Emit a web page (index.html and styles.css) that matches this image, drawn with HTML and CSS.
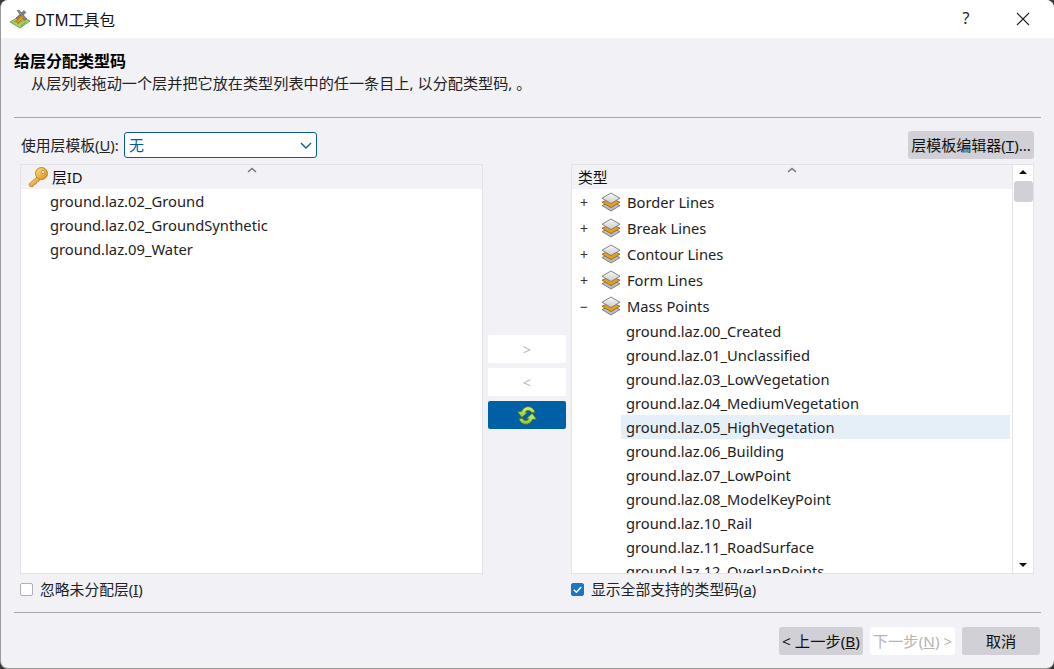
FILE: index.html
```html
<!DOCTYPE html>
<html lang="zh">
<head>
<meta charset="utf-8">
<title>DTM工具包</title>
<link rel="stylesheet" href="styles.css">
</head>
<body>
<svg class="defs" width="0" height="0" aria-hidden="true">
  <defs>
    <linearGradient id="lt" x1="0" y1="0" x2="0" y2="1"><stop offset="0" stop-color="#fafafa"/><stop offset="1" stop-color="#c9c9c9"/></linearGradient>
    <linearGradient id="key" x1="0" y1="0" x2="1" y2="1"><stop offset="0" stop-color="#fbe08a"/><stop offset="1" stop-color="#e08a12"/></linearGradient>
    <linearGradient id="gr" x1="0" y1="0" x2="0" y2="1"><stop offset="0" stop-color="#d2ee8a"/><stop offset="1" stop-color="#8ccb1e"/></linearGradient>
    <symbol id="layers" viewBox="0 0 20 20">
      <path d="M10 9.500 19 13.600 10 19 1 13.600Z" fill="#bcbcbc" stroke="#777" stroke-width=".9"/>
      <path d="M10 6 19 10.200 10 15.600 1 10.200Z" fill="#e59f1c" stroke="#8a6a22" stroke-width=".9"/>
      <path d="M10 1 19 6.200 10 11.600 1 6.200Z" fill="url(#lt)" stroke="#777" stroke-width=".9"/>
    </symbol>
  </defs>
</svg>
<div class="window">
  <header class="titlebar">
    <svg class="app-icon" viewBox="0 0 22 22" aria-hidden="true">
      <path d="M1 14 11 8 21 13 11 20Z" fill="#a5cf62" stroke="#6f8f3a" stroke-width=".8"/>
      <path d="M5 14 11 11M8 16 15 12M12 18 17 14" stroke="#6f9a33" stroke-width=".8" fill="none"/>
      <path d="M15 2.500 17 4.500 9 12 7 10Z" fill="#7d7d7d" stroke="#555" stroke-width=".5"/>
      <path d="M8 2.500 10 2 18 11 15.500 12.500Z" fill="#8a8a8a" stroke="#555" stroke-width=".5"/>
      <path d="M7 13.500 12 7.500 14.500 9.500 9.500 15Z" fill="#ee8f16" stroke="#a8600e" stroke-width=".5"/>
    </svg>
    <span class="title-text">DTM工具包</span>
    <span class="title-help">?</span>
    <svg class="title-close" viewBox="0 0 14 14" aria-hidden="true"><path d="M1 1 13 13M13 1 1 13" stroke="#222" stroke-width="1.100" fill="none"/></svg>
  </header>

  <section class="intro">
    <h1>给层分配类型码</h1>
    <p>从层列表拖动一个层并把它放在类型列表中的任一条目上, 以分配类型码, 。</p>
  </section>
  <hr class="rule rule-top">

  <div class="template-row">
    <label class="template-label">使用层模板(<u>U</u>):</label>
    <div class="combo">
      <span>无</span>
      <svg class="combo-chev" viewBox="0 0 12 7" aria-hidden="true"><path d="M1 1 6 6 11 1" stroke="#0a5a9c" stroke-width="1.400" fill="none"/></svg>
    </div>
    <button class="btn btn-template">层模板编辑器(<u>T</u>)...</button>
  </div>

  <div class="panels">
    <div class="panel">
      <div class="col-head">
        <span class="col-title">
          <svg class="key-icon" viewBox="0 0 22 22" aria-hidden="true">
            <path d="M11 10 2 18 3 20.500 6 20.500 7 18.500 9 18 9.500 16 11.500 15.500 14 12Z" fill="url(#key)" stroke="#b56d0c" stroke-width=".7"/>
            <circle cx="14.500" cy="7.500" r="6" fill="url(#key)" stroke="#b56d0c" stroke-width=".8"/>
            <circle cx="16" cy="6" r="1.700" fill="#fff6d0" stroke="#b56d0c" stroke-width=".6"/>
          </svg>
          层ID
        </span>
        <svg class="sort" viewBox="0 0 10 6" aria-hidden="true"><path d="M1 5 5 1.500 9 5" stroke="#777" stroke-width="1.500" fill="none"/></svg>
      </div>
      <ul class="list">
        <li>ground.laz.02_Ground</li>
        <li>ground.laz.02_GroundSynthetic</li>
        <li>ground.laz.09_Water</li>
      </ul>
    </div>

    <div class="middle">
      <button class="mid-btn">&gt;</button>
      <button class="mid-btn">&lt;</button>
      <button class="mid-btn mid-primary" aria-label="刷新">
        <svg viewBox="0 0 20 21" width="20" height="21" aria-hidden="true">
          <path d="M4.500 6.500C6 3 9.500 1 13 2 15.500 2.800 17.500 4.800 18 7.500L14.500 7.500C13.800 5.800 11.800 5 10 5.700 9.200 6 8.700 6.500 8.300 7.200L10.500 7.500 4.800 12.500 .5 6.700Z" fill="url(#gr)" stroke="#4f6d1c" stroke-width=".7"/>
          <path d="M15.500 14.500C14 18 10.500 20 7 19 4.500 18.200 2.500 16.200 2 13.500L5.500 13.500C6.200 15.200 8.200 16 10 15.300 10.800 15 11.300 14.500 11.700 13.800L9.500 13.500 15.200 8.500 19.500 14.300Z" fill="url(#gr)" stroke="#4f6d1c" stroke-width=".7"/>
        </svg>
      </button>
    </div>

    <div class="panel panel-tree">
      <div class="tree-main">
        <div class="col-head">
          <span class="col-title col-title-type">类型</span>
          <svg class="sort" viewBox="0 0 10 6" aria-hidden="true"><path d="M1 5 5 1.500 9 5" stroke="#777" stroke-width="1.500" fill="none"/></svg>
        </div>
        <div class="tree">
          <div class="group"><span class="exp">+</span><svg class="layer-icon"><use href="#layers"/></svg><span>Border Lines</span></div>
          <div class="group"><span class="exp">+</span><svg class="layer-icon"><use href="#layers"/></svg><span>Break Lines</span></div>
          <div class="group"><span class="exp">+</span><svg class="layer-icon"><use href="#layers"/></svg><span>Contour Lines</span></div>
          <div class="group"><span class="exp">+</span><svg class="layer-icon"><use href="#layers"/></svg><span>Form Lines</span></div>
          <div class="group"><span class="exp">−</span><svg class="layer-icon"><use href="#layers"/></svg><span>Mass Points</span></div>
          <div class="leaf">ground.laz.00_Created</div>
          <div class="leaf">ground.laz.01_Unclassified</div>
          <div class="leaf">ground.laz.03_LowVegetation</div>
          <div class="leaf">ground.laz.04_MediumVegetation</div>
          <div class="leaf selected">ground.laz.05_HighVegetation</div>
          <div class="leaf">ground.laz.06_Building</div>
          <div class="leaf">ground.laz.07_LowPoint</div>
          <div class="leaf">ground.laz.08_ModelKeyPoint</div>
          <div class="leaf">ground.laz.10_Rail</div>
          <div class="leaf">ground.laz.11_RoadSurface</div>
          <div class="leaf">ground.laz.12_OverlapPoints</div>
        </div>
      </div>
      <div class="scrollbar">
        <span class="arrow arrow-up"></span>
        <span class="thumb"></span>
        <span class="arrow arrow-down"></span>
      </div>
    </div>
  </div>

  <div class="checks">
    <label class="check"><span class="box"></span>忽略未分配层(<u>I</u>)</label>
    <label class="check"><span class="box box-on"><svg viewBox="0 0 14 14" aria-hidden="true"><path d="M3 7.200 5.800 10 11 4.200" stroke="#fff" stroke-width="1.600" fill="none"/></svg></span>显示全部支持的类型码(<u>a</u>)</label>
  </div>
  <hr class="rule rule-bottom">

  <footer class="footer">
    <button class="btn btn-back">&lt; 上一步(<u>B</u>)</button>
    <button class="btn btn-next" disabled>下一步(<u>N</u>) &gt;</button>
    <button class="btn btn-cancel">取消</button>
  </footer>
</div>
</body>
</html>
```

FILE: styles.css
```css
* { box-sizing: border-box; }
html, body { margin: 0; height: 100%; }
body {
  background: #3a3a3a;
  font-family: "Noto Sans", "Noto Sans CJK SC", sans-serif;
  font-size: 14px;
  color: #111;
  overflow: hidden;
}
.defs { display: block; height: 0; }
.window {
  width: 1054px;
  height: 669px;
  background: #f1f1f6;
  border-radius: 8px;
  border-left: 1px solid #9a9a9a;
  border-bottom: 1px solid #9a9a9a;
  overflow: hidden;
  display: flex;
  flex-direction: column;
}
.titlebar {
  height: 38px;
  background: #fff;
  display: flex;
  align-items: center;
  padding-left: 8px;
  flex: none;
}
.app-icon { width: 22px; height: 22px; flex: none; }
.title-text { margin-left: 4px; font-size: 15.500px; color: #111; }
.title-help { margin-left: auto; width: 14px; font-size: 16px; color: #222; text-align: center; padding-bottom: 2px; }
.title-close { width: 14px; height: 14px; margin: 0 24px 0 43px; }

.intro { height: 79px; padding: 12px 0 0 13px; flex: none; }
.intro h1 { margin: 0; font-size: 16px; line-height: 22px; font-weight: 700; color: #000; }
.intro p { margin: 0 0 0 17px; font-size: 15.150px; line-height: 22px; color: #222; white-space: nowrap; }

.rule { margin: 0 13px 0 13px; height: 1px; border: 0; background: #a6a6ab; flex: none; }

.template-row {
  display: flex;
  align-items: center;
  height: 28px;
  margin: 13px 20px 5px 20px;
  flex: none;
}
.template-label { font-size: 14.800px; width: 103px; color: #222; white-space: nowrap; padding-bottom: 2px; }
.combo {
  width: 193px;
  height: 26px;
  background: #fff;
  border: 1px solid #0a5a9c;
  border-radius: 3px;
  color: #005a9e;
  font-size: 15px;
  display: flex;
  align-items: center;
  justify-content: space-between;
  padding: 0 3px 2px 4px;
}
.combo-chev { width: 12px; height: 7px; margin: 2px 1px 0 0; }
.btn {
  font-family: inherit;
  border: 0;
  border-radius: 3px;
  background: #d0d0d6;
  color: #111;
  font-size: 15px;
  padding: 0 0 2px;
  white-space: nowrap;
}
.btn-template { margin-left: auto; width: 126px; height: 28px; }

.panels {
  display: grid;
  grid-template-columns: 463px 88px 463px;
  margin-left: 19px;
  height: 410px;
  flex: none;
}
.panel { background: #fff; border: 1px solid #e2e2e8; overflow: hidden; }
.col-head {
  height: 24px;
  background: #f1f1f6;
  display: grid;
  grid-template-columns: 1fr auto 1fr;
  align-items: center;
  font-size: 14.800px;
  padding-bottom: 2px;
}
.col-title { display: flex; align-items: center; gap: 3px; padding-left: 6px; white-space: nowrap; color: #111; }
.key-icon { width: 22px; height: 22px; flex: none; margin-bottom: -1px; }
.sort { width: 10px; height: 6px; align-self: start; margin-top: 2px; }
.list { list-style: none; margin: 0; padding: 0; }
.list li { height: 24px; line-height: 24px; padding-left: 29px; font-size: 14.750px; color: #222; }

.middle {
  display: flex;
  flex-direction: column;
  align-items: center;
  gap: 5px;
  padding-top: 171px;
}
.mid-btn {
  width: 78px;
  height: 28px;
  border: 0;
  border-radius: 2px;
  background: #fff;
  color: #bdbdbd;
  font-family: inherit;
  font-size: 14.500px;
  padding: 0;
  display: flex;
  align-items: center;
  justify-content: center;
}
.mid-primary { background: #0060a6; }

.panel-tree { display: flex; }
.tree-main { flex: 1; min-width: 0; }
.tree { height: 384px; overflow: hidden; }
.group {
  height: 26px;
  display: flex;
  align-items: center;
  font-size: 14.700px;
  color: #222;
}
.exp { width: 29px; padding-left: 8px; font-size: 14px; color: #333; flex: none; }
.layer-icon { width: 20px; height: 20px; flex: none; margin-right: 6px; }
.leaf {
  height: 24px;
  line-height: 24px;
  font-size: 14.700px;
  color: #222;
  margin-left: 49px;
  padding-left: 5px;
  margin-right: 2px;
}
.selected { background: #e5eff8; }

.scrollbar {
  width: 21px;
  background: #fff;
  border-left: 1px solid #e2e2e8;
  display: flex;
  flex-direction: column;
  align-items: center;
  flex: none;
  padding: 5px 0 6px;
}
.arrow { width: 0; height: 0; border-left: 4px solid transparent; border-right: 4px solid transparent; }
.arrow-up { border-bottom: 4px solid #111; }
.arrow-down { border-top: 4px solid #111; margin-top: auto; }
.thumb { width: 19px; height: 21px; margin-top: 7px; background: #d0d0d6; border-radius: 3px; }

.checks {
  display: grid;
  grid-template-columns: 551px 463px;
  margin: 4px 0 0 19px;
  height: 20px;
  flex: none;
}
.check { display: flex; align-items: center; font-size: 14.800px; color: #222; white-space: nowrap; padding-bottom: 2px; }
.box {
  width: 13px;
  height: 13px;
  margin-right: 7px;
  background: #fff;
  border: 1px solid #aeaeb4;
  border-radius: 2px;
  flex: none;
  margin-top: 2px;
}
.box-on { background: #1a75c4; border-color: #1a75c4; display: flex; align-items: center; justify-content: center; }
.box-on svg { width: 13px; height: 13px; flex: none; }

.rule-bottom { margin-top: 14px; }

.footer {
  display: flex;
  justify-content: flex-end;
  gap: 7px;
  padding: 14px 14px 0 0;
}
.footer .btn { height: 28px; font-size: 15.300px; }
.btn-back { width: 84px; }
.btn-next { width: 85px; background: #fff; color: #b5b5b5; }
.btn-cancel { width: 78px; }
```
